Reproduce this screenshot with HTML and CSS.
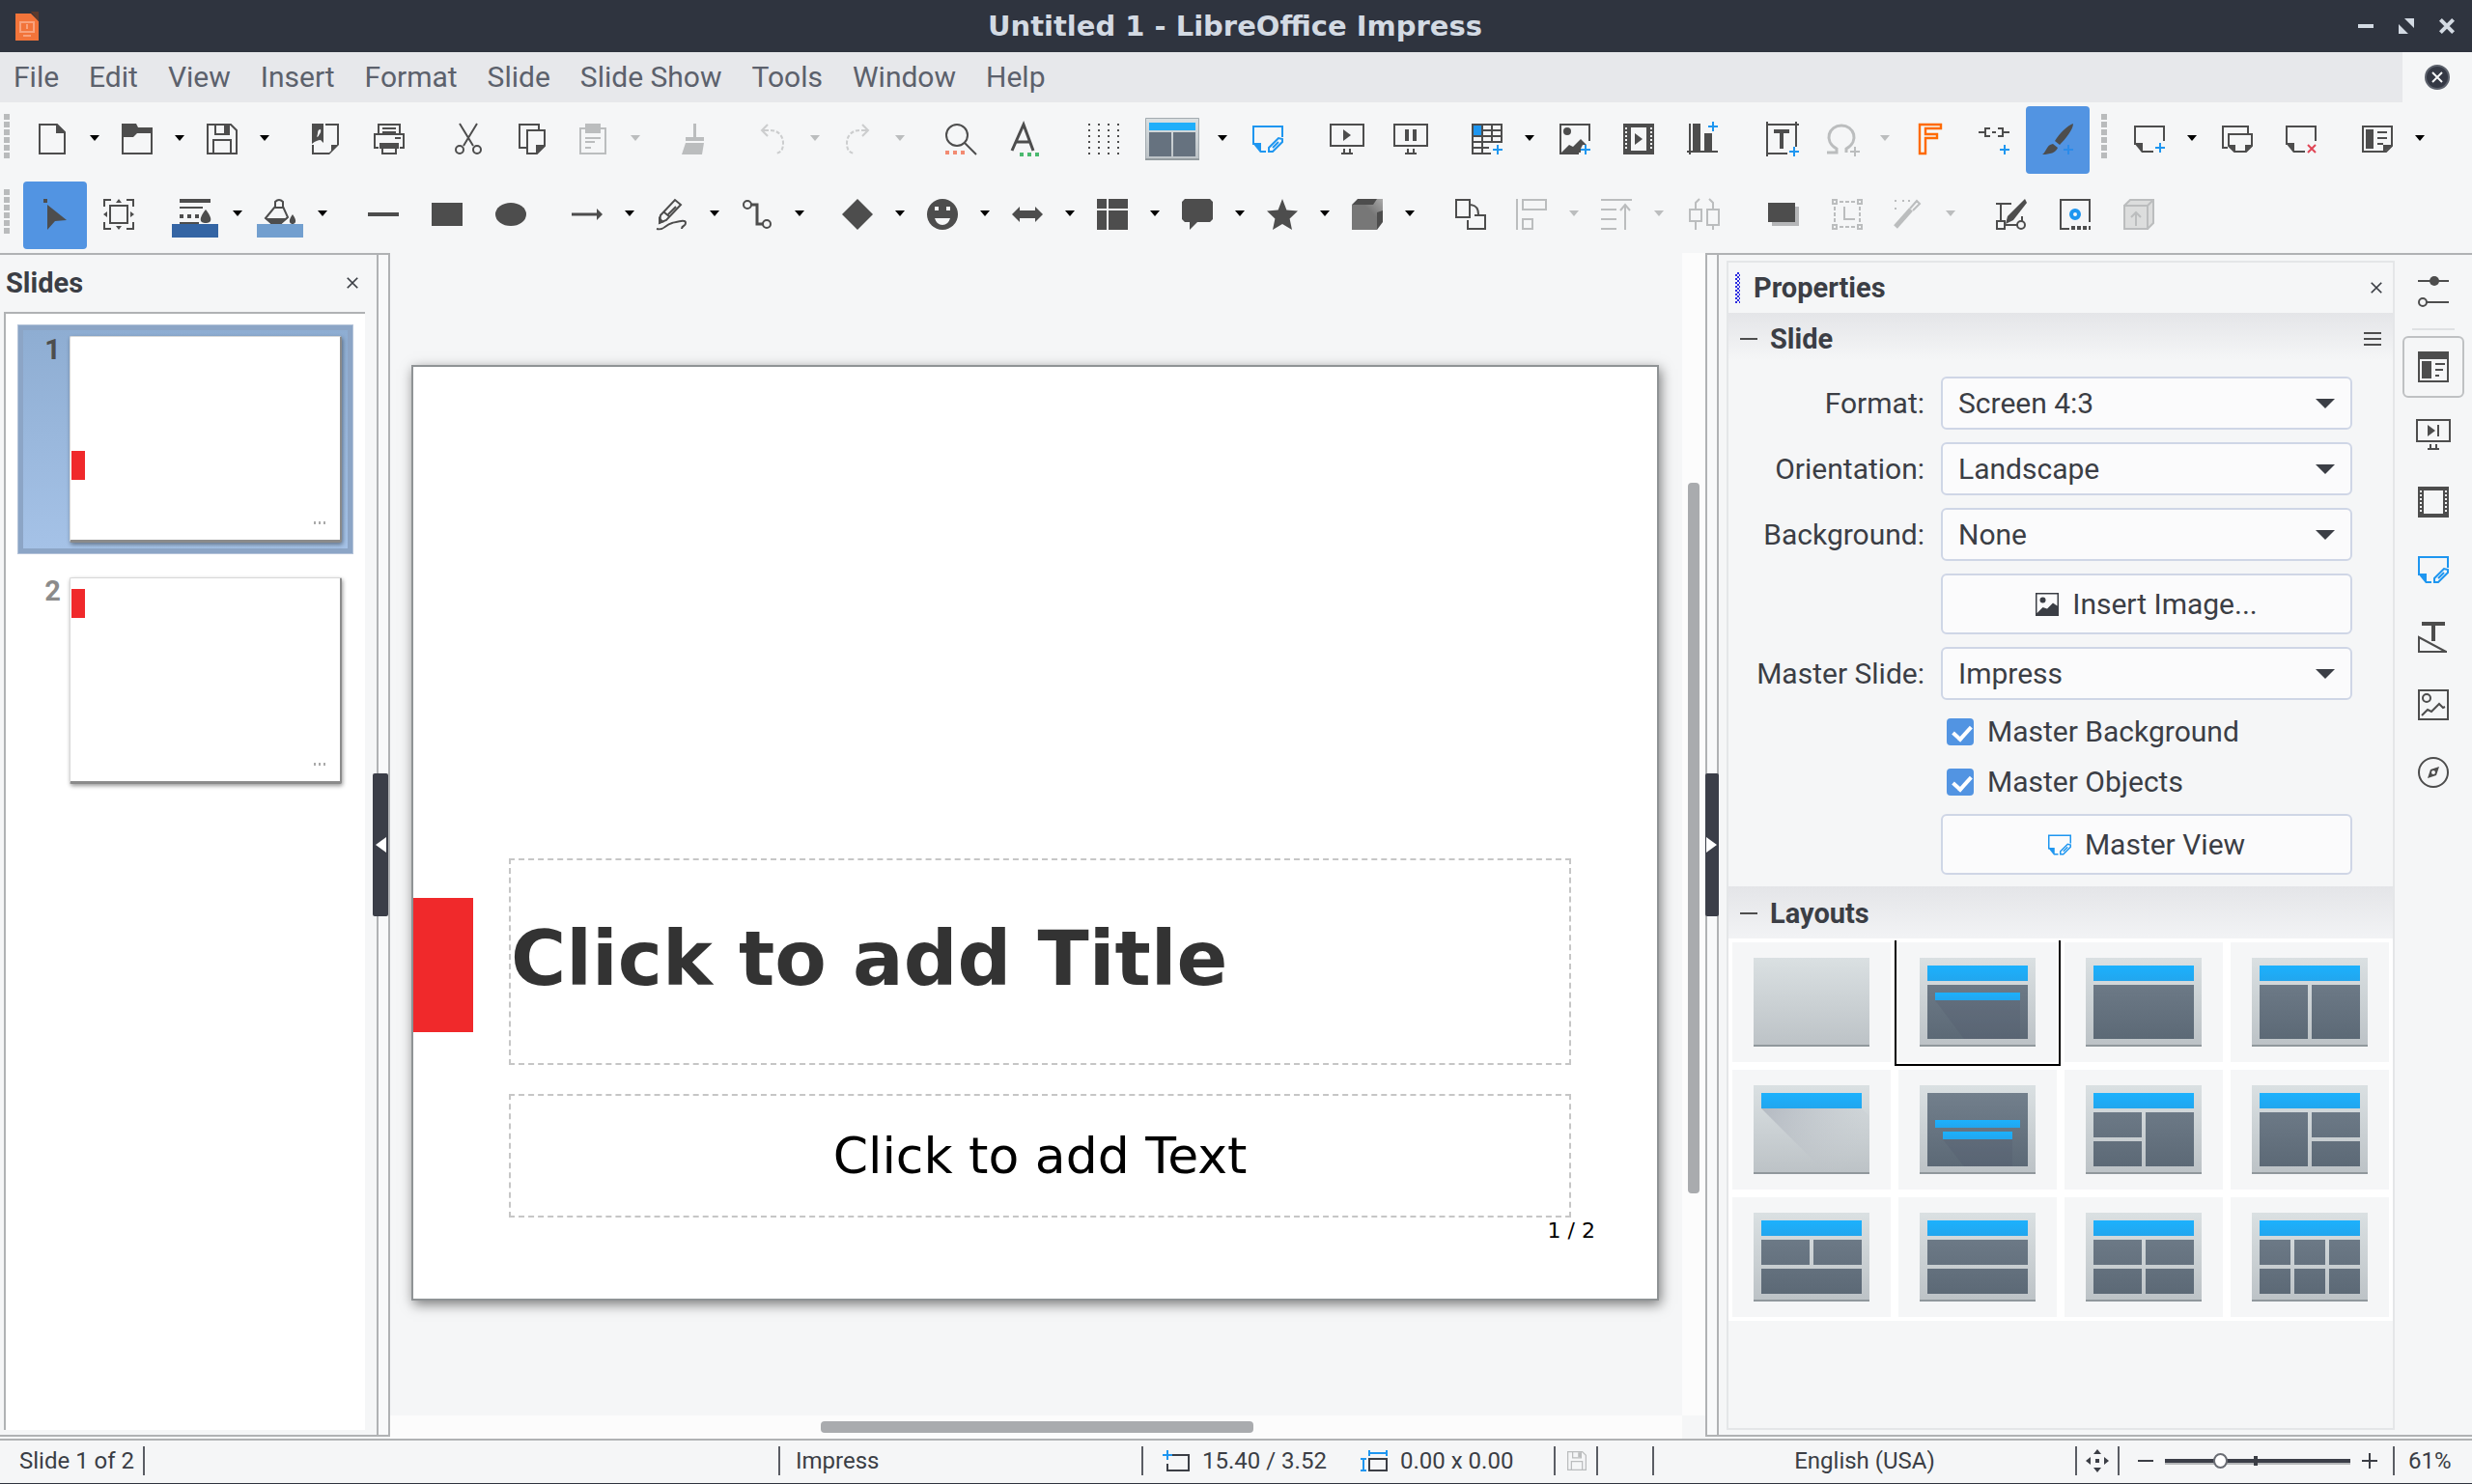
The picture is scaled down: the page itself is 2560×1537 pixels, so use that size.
FILE: index.html
```html
<!DOCTYPE html>
<html lang="en">
<head>
<meta charset="utf-8">
<title>Untitled 1 - LibreOffice Impress</title>
<link rel="stylesheet" href="styles.css">
</head>
<body>
<svg class="defs" aria-hidden="true">
<defs>
<linearGradient id="g-frame" x1="0" y1="0" x2="0" y2="1"><stop offset="0" stop-color="#dae0e2"/><stop offset="1" stop-color="#bcc2c6"/></linearGradient>
<linearGradient id="g-body" gradientUnits="userSpaceOnUse" x1="0" y1="8" x2="0" y2="84"><stop offset="0" stop-color="#727f8c"/><stop offset="1" stop-color="#5c6976"/></linearGradient>
<linearGradient id="g-bar" x1="0" y1="0" x2="0" y2="1"><stop offset="0" stop-color="#1cb1fd"/><stop offset="1" stop-color="#22a6ee"/></linearGradient>
<linearGradient id="g-cube" x1="0" y1="1" x2="1" y2="0"><stop offset=".6" stop-color="#777"/><stop offset="1" stop-color="#aaa"/></linearGradient>
<linearGradient id="g-shade" x1="0" y1="0" x2="1" y2=".6"><stop offset="0" stop-color="#9aa0ad" stop-opacity=".55"/><stop offset="1" stop-color="#c8ccd1" stop-opacity="0"/></linearGradient>
</defs>
<symbol id="new" viewBox="0 0 16 16"><path d="M1.5.5h9l4 4v11h-13z"/><path class="f" d="M10 0v5h5z"/></symbol>
<symbol id="open" viewBox="0 0 16 16"><path d="M.5.5v15h15V3"/><path class="f" d="M0 0h7.500l1 2H16v3H8L6 7H0z"/></symbol>
<symbol id="save" viewBox="0 0 16 16"><path d="M.5.5h12l3 3v12H.5zM4.500.5v5h7v-5M3.500 15V8.500h9V15"/><path class="f" d="M9 1h3v4H9z"/></symbol>
<symbol id="pdf" viewBox="0 0 16 16"><path d="M8 .5h6.500V11M1.500 11v4.500H10"/><path class="f" fill-rule="evenodd" d="M1 0h6v10L5.500 8.500C4 8.500 3 9 1 10.500zM5.500 3c-2 0-1 2-2 4l1-.5c0-1 1.500-1.500 1-3.500zM10 16v-1l1-1v-3h4z"/></symbol>
<symbol id="print" viewBox="0 0 16 16"><path d="M2.500 5V.5h11V5M4.500 2.500h7M4.500 4.500h7M2.500 12.500h-2v-7h15v7h-2M4.500 12v3.500h7V12M11 7.500h3"/><path class="f" d="M3 10h10v3H3z"/></symbol>
<symbol id="cut" viewBox="0 0 16 16"><path d="M3.500 0l7 11.500M12.500 0l-7 11.500"/><circle cx="3.500" cy="13.500" r="2"/><circle cx="12.500" cy="13.500" r="2"/></symbol>
<symbol id="copy" viewBox="0 0 16 16"><path d="M5 12.500H1.500V.5h10V3M5.500 3.500h9v8l-4 4h-5z"/><path class="f" d="M10 16v-5h5z"/></symbol>
<symbol id="paste" viewBox="0 0 16 16"><path d="M4 2.500H1.500v13h13v-13H12M4 7.500h8M4 9.500h5M4 12.500h3"/><path class="f" d="M4 0h8v5H4z"/></symbol>
<symbol id="clone" viewBox="0 0 16 16"><path class="f" d="M6.500 0h1.500v7h4v2H2.500V7h4zM2.500 10h9.500l-1 6H.5z"/></symbol>
<symbol id="undo" viewBox="0 0 16 16"><path d="M5.500.5l-3 3 3 3M2.500 3.500H6"/><path stroke-dasharray="2 1" d="M7 3.500c4 0 6.500 3 6.500 6.500s-1 5-4 5.500"/></symbol>
<symbol id="redo" viewBox="0 0 16 16"><path d="M10.500.5l3 3-3 3M13.500 3.500H10"/><path stroke-dasharray="2 1" d="M9 3.500C5 3.500 2.500 6.500 2.500 10s1 5 4 5.500"/></symbol>
<symbol id="find" viewBox="0 0 16 16"><circle cx="6" cy="6" r="5.500"/><path d="M10 10l6 6"/><path stroke="#f28b72" stroke-width="2" stroke-dasharray="2 2" d="M0 15h10"/></symbol>
<symbol id="spell" viewBox="0 0 16 16"><path stroke-width="1.500" d="M1.500 14L7.500.5 12.500 14M4 9.500h7"/><path stroke="#4bb96f" stroke-width="2" stroke-dasharray="2 2" d="M5.500 16h10"/></symbol>
<symbol id="grid" viewBox="0 0 16 16"><path stroke-dasharray="1 2" d="M.5 0v16M5.500 0v16M10.500 0v16M15.500 0v16"/></symbol>
<symbol id="layout" viewBox="0 0 56 44"><path fill="url(#g-frame)" stroke="none" d="M0 0h56v44H0z"/><path stroke="#a3abb0" d="M.5.5h55v42H.5z"/><path fill="#949ca0" stroke="none" d="M0 42h56v2H0z"/><path fill="#1eaefa" stroke="none" d="M4 5h48v8H4z"/><path fill="#66727f" stroke="none" d="M4 15h23v25H4zM29 15h23v25H29z"/></symbol>
<symbol id="master" viewBox="0 0 16 16"><path d="M.5 11V1.500h15V7"/><path class="f" d="M0 10h4.500v4H7v1H4z"/><path d="M8.500 14.500v-2l5-5 2 .5v1.500l-5 5zM10.500 12.500l3-3"/></symbol>
<symbol id="start" viewBox="-1 0 18 16"><path d="M-.5.5h17v11h-17zM5 15.500h6M6.500 13v2.500M9.500 13v2.500"/><path class="f" d="M6 3l4 3-4 3z"/></symbol>
<symbol id="pause" viewBox="-1 0 18 16"><path d="M-.5.5h17v11h-17zM5 15.500h6M6.500 13v2.500M9.500 13v2.500"/><path class="f" d="M5 3h2v6H5zM9 3h2v6H9z"/></symbol>
<symbol id="table" viewBox="0 0 16 16"><path d="M.5.5h15v9H.5zM.5 9v6.500H10M5.500 0v16M10.500 0v10M0 3.500h16M0 6.500h16M0 12.500h9"/><path class="b" d="M1 1h4v5H1z"/><path class="p" d="M13.500 11v5M11 13.500h5"/></symbol>
<symbol id="image" viewBox="0 0 16 16"><path d="M10 15.500H.5V.5h15V9"/><circle class="f" cx="4" cy="4" r="2"/><path class="f" d="M1 15l4-4 2 1 4-4 3 3h-2l-1 2v2z"/><path class="p" d="M13.500 11v5M11 13.500h5"/></symbol>
<symbol id="video" viewBox="0 0 16 16"><path class="f" fill-rule="evenodd" d="M0 0h16v16H0zM4 2v12h8V2z"/><path stroke="#f5f6f7" stroke-dasharray="1 1" d="M1.500 2v12M14.500 2v12"/><path class="f" d="M6 5l4 3-4 3z"/></symbol>
<symbol id="chart" viewBox="0 0 16 16"><path d="M1.500 0v16M0 14.500h16"/><path class="f" d="M3 0h4v14H3zM9 5h4v9H9z"/><path class="p" d="M13.500-1v5M11 1.500h5"/></symbol>
<symbol id="textbox" viewBox="0 0 16 16"><path d="M0 .5h17M.5-1v18M15.500-1v13M0 15.500h11"/><path stroke-width="2" d="M4 4h8M8 4v9"/><path class="p" d="M14.500 12v5M12 14.500h5"/></symbol>
<symbol id="omega" viewBox="0 0 16 16"><path stroke-width="1.500" d="M0 15h5v-2C-2 9 1 1 7.500 1S17 9 10 13v2"/><path d="M14.500 12v5M12 14.500h5"/></symbol>
<symbol id="fontwork" viewBox="0 0 16 16"><path stroke="#ff6a00" stroke-width="1.200" d="M2.500.5h11v2h-8v3h6v2h-6v8h-3z"/></symbol>
<symbol id="link" viewBox="0 0 16 16"><path d="M0 4.500h3M6 2.500H3.500v4H6M7 4.500h2M10 2.500h2.500v4H10M13 4.500h3"/><path class="p" d="M13.500 11v5M11 13.500h5"/></symbol>
<symbol id="draw" viewBox="0 0 16 16"><path class="f" d="M16 0c0 3-4 8-7 11L6.500 9C9 5 13 1 16 0zM5.500 10.500l2.500 2C7 15 4 16 0 16c2-1 2-5 5.500-5.500z"/><path stroke="#2b8bea" d="M13.500 11v5M11 13.500h5"/></symbol>
<symbol id="slide-add" viewBox="0 0 16 16"><path d="M.5 11V1.500h15V9M4 14.500h6"/><path class="f" d="M0 10h4.500v5H4z"/><path class="p" d="M13.500 10v5M11 12.500h5"/></symbol>
<symbol id="slide-dup" viewBox="0 0 16 16"><path d="M3 12.500H.5v-11h13V5M3.500 5.500h12v6l-3 3h-6l-3-3z"/><path class="f" d="M3 11h4v4zM12 15v-4h4z"/></symbol>
<symbol id="slide-del" viewBox="0 0 16 16"><path d="M.5 11V1.500h15V9M4 14.500h6"/><path class="f" d="M0 10h4.500v5H4z"/><path stroke="#e04556" d="M11.500 11l4 4M15.500 11l-4 4"/></symbol>
<symbol id="slide-lay" viewBox="0 0 16 16"><path d="M.5 1.500h15v10l-3 3H.5zM8 4.500h5M8 7.500h5M8 10.500h3"/><path class="f" d="M2 3h4v10H2zM11 15v-4h5z"/></symbol>
<symbol id="pointer" viewBox="0 0 16 16"><path class="f" d="M4 3l10 8-6 .5L4 16z"/><path class="f" d="M2 0h2v2H2z"/></symbol>
<symbol id="zoompan" viewBox="0 0 16 16"><path d="M3.500 3.500h9v9h-9zM.5 4V.5H4M12 .5h3.500V4M15.500 12v3.500H12M4 15.500H.5V12"/><path class="f" d="M8 0l1.500 2h-3zM8 16l1.500-2h-3zM0 8l2-1.500v3zM16 8l-2-1.500v3z"/></symbol>
<symbol id="linecolor" viewBox="0 0 24 20"><path stroke-width="2" d="M4 1h16"/><path d="M4 4.500h12M4 12.500h10"/><path stroke-width="2" stroke-dasharray="2 2" d="M4 9h10"/><path class="f" d="M17.500 5.500c4 5 3 7 0 7s-4-2 0-7z"/><path fill="#3465a4" stroke="none" d="M0 13h24v7H0z"/></symbol>
<symbol id="fillcolor" viewBox="0 0 24 20"><path d="M9.500 4V1.500q2-2 4 0V4L16 9.500 12 13H8L4.500 10zM9 4.500h5"/><path class="f" d="M4 10h12l-4 3.500H8zM18.500 8c3 4 1 5 0 5s-3-1 0-5z"/><path fill="#729fcf" stroke="none" d="M0 13h24v7H0z"/></symbol>
<symbol id="line" viewBox="0 0 16 16"><path stroke-width="2" d="M0 8h16"/></symbol>
<symbol id="rect" viewBox="0 0 16 16"><path class="f" d="M0 2h16v12H0z"/></symbol>
<symbol id="ellipse" viewBox="0 0 16 16"><ellipse class="f" cx="8" cy="8" rx="8" ry="6"/></symbol>
<symbol id="arrowline" viewBox="0 0 16 16"><path stroke-width="1.500" d="M0 8h14"/><path class="f" d="M13 5l3 3-3 3z"/></symbol>
<symbol id="curve" viewBox="0 0 16 16"><path d="M1.500 12.500l.5-4L9.500.5l3 2.500L5 11zM4 7l3 2.500M6 8l4-4M0 15.500c4 1 4-2 8-3 4-1 7-2 7 0s-2 1-2 3"/><path class="f" d="M1 13V9l3 3z"/></symbol>
<symbol id="connector" viewBox="0 0 16 16"><circle cx="3" cy="3" r="2"/><circle cx="13" cy="13" r="2"/><path stroke-width="1.500" d="M5 3h3v10h3"/></symbol>
<symbol id="diamond" viewBox="0 0 16 16"><path class="f" d="M8 0l8 8-8 8-8-8z"/></symbol>
<symbol id="smiley" viewBox="0 0 16 16"><circle class="f" cx="8" cy="8" r="8"/><path fill="#f5f6f7" stroke="none" d="M4 4h2v2H4zM10 4h2v2h-2zM4 10h8q-1 3.500-4 3.500T4 10z"/></symbol>
<symbol id="darrow" viewBox="0 0 16 16"><path class="f" d="M0 8l4-4v2h8V4l4 4-4 4v-2H4v2z"/></symbol>
<symbol id="flow" viewBox="0 0 16 16"><path class="f" d="M0 0h5v5H0zM6 0h10v5H6zM0 6h5v10H0zM6 6h10v10H6z"/></symbol>
<symbol id="callout" viewBox="0 0 16 16"><path class="f" d="M1.500 0h13L16 1.500v9L14.500 12H8l-4 4v-4H1.500L0 10.500v-9z"/></symbol>
<symbol id="star" viewBox="0 0 16 16"><path class="f" d="M8 0l2.200 5.800L16 6.200l-4.200 4L13 16l-5-3-5 3 1.200-5.800L0 6.200l5.800-.4z"/></symbol>
<symbol id="cube" viewBox="0 0 16 16"><path class="f" d="M0 3l3-3h13v12l-3 4V3z"/><path fill="url(#g-cube)" stroke="none" d="M0 3h11l2-3h3v6l-3 1v9H0z"/></symbol>
<symbol id="rotate" viewBox="0 0 16 16"><path d="M.5.5h7v9h-7zM7 3c4 0 5 2 5 5M13 8.500h2.500v7h-9V11M10 8.500h5"/></symbol>
<symbol id="align" viewBox="0 0 16 16"><path d="M.5 0v16M3.500.5h12v5h-12zM3.500 10.500h5v5h-5z"/></symbol>
<symbol id="arrange" viewBox="0 0 16 16"><path d="M0 .5h16M0 5.500h8M0 10.500h8M0 15.500h8M12.500 3v13M10 6l2.500-3L15 6"/></symbol>
<symbol id="distribute" viewBox="0 0 16 16"><path d="M.5 5.500h6v6h-6zM9.500 5.500h6v8h-6zM3.500 12v4M12.500 14v2M3.500 5V2l2-2M12.500 5V2l-2-2"/></symbol>
<symbol id="shadow" viewBox="0 0 16 16"><path fill="#b5b6b8" stroke="none" d="M2 4h14v10H2z"/><path class="f" d="M0 2h14v10H0z"/></symbol>
<symbol id="crop" viewBox="0 0 16 16"><path d="M.5.5h2v2h-2zM13.500.5h2v2h-2zM.5 13.500h2v2h-2zM13.500 13.500h2v2h-2zM6.500 4v6.500H12"/><path stroke-dasharray="2 1" d="M4 1.500h8M4 14.500h8M1.500 4v8M14.500 4v8"/></symbol>
<symbol id="wand" viewBox="0 0 16 16"><path stroke-width="2.500" d="M1.500 14.500l8-9"/><path d="M9 5l3.500-4 1.500 1.500L10.500 6M1 1h1M5 1h1M1 5h1M8 1h1"/></symbol>
<symbol id="points" viewBox="0 0 16 16"><path d="M0 2.500h8M2.500 2v9M.5 11.500h4v4h-4zM5 13.500h6M13.500 9v3"/><circle cx="13" cy="13.500" r="2"/><path class="f" d="M15 0l1 2-7 9-4 2 1-4z"/></symbol>
<symbol id="glue" viewBox="0 0 16 16"><path d="M5 15.500H.5V.5h15V12"/><path stroke-width="2" stroke-dasharray="2 1" d="M6 15h10"/><circle cx="8" cy="8" r="2" stroke="#1e96f0" stroke-width="2"/></symbol>
<symbol id="extrude" viewBox="0 0 16 16"><path fill="#dcdddd" d="M.5 3.500h12v12H.5zM.5 3.500l3-3h12v12l-3 3M12.500 3.500l3-3M6.500 14V7M4 9.500L6.500 7 9 9.500"/></symbol>
<symbol id="picture" viewBox="0 0 16 16"><path class="f" fill-rule="evenodd" d="M0 0h16v16H0zM1 1v13l4-4 3 1 4-4 3 2V1z"/><circle class="f" cx="5" cy="5" r="2"/></symbol>
<symbol id="sliders" viewBox="0 0 16 16"><path d="M0 2.500h16M4 13.500h12"/><circle class="f" cx="8.500" cy="2.500" r="2.500"/><circle cx="2.500" cy="13.500" r="2"/></symbol>
<symbol id="props" viewBox="0 0 16 16"><path d="M.5.5h15v15H.5zM9 6.500h5M9 9.500h4M9 12.500h2"/><path class="f" d="M0 0h16v4H0zM2 5h5v9H2z"/></symbol>
<symbol id="trans" viewBox="-1 0 18 16"><path d="M-.5.5h17v11h-17zM5 15.500h6M6.500 13v2.500M9.500 13v2.500M10.500 3v6"/><path class="f" d="M5 3l4 3-4 3z"/></symbol>
<symbol id="film" viewBox="0 0 16 16"><path class="f" fill-rule="evenodd" d="M0 0h16v16H0zM3 2v12h10V2z"/><path stroke="#f5f6f7" stroke-dasharray="1 1" d="M1.500 2v12M14.500 2v12"/></symbol>
<symbol id="styles" viewBox="0 0 16 16"><path stroke-width="2" d="M2 1h12M8 1v9"/><path d="M.5 8v7.500h14zM0 15.500h15"/></symbol>
<symbol id="gallery" viewBox="0 0 16 16"><path d="M.5.5h15v15H.5zM2 13.500l3-3 2 1 4-4 2 2 1-.5"/><circle cx="4.500" cy="4.500" r="2"/></symbol>
<symbol id="compass" viewBox="0 0 16 16"><circle cx="8" cy="8" r="7.500"/><path class="f" fill-rule="evenodd" d="M11 5l-1.500 4.500L5 11l1.500-4.500zM8 7a1 1 0 100 2 1 1 0 000-2z"/></symbol>
<symbol id="pos" viewBox="0 0 14 11"><path d="M5 2.500h8.500v8h-11V7"/><path class="p" d="M2.500 0v5M0 2.500h5"/></symbol>
<symbol id="size" viewBox="0 0 14 11"><path d="M4.500 4.500h9v6h-9z"/><path class="p" d="M4.500 0v3M13.500 0v3M4 1.500h10M0 4.500h3M0 10.500h3M1.500 4v7"/></symbol>
<symbol id="fit" viewBox="0 0 12 12"><path class="f" d="M6 0l2 2.500H4zM6 12l2-2.500H4zM0 6l2.500-2v4zM12 6L9.500 4v4zM5 5h2v2H5z"/></symbol>
<symbol id="shade" viewBox="0 0 120 92"><path fill="url(#g-frame)" d="M0 0h120v92H0z"/><path fill="#90989c" d="M0 90h120v2H0z"/></symbol>
</svg>

<div class="app">
<header class="titlebar">
  <svg class="appicon" viewBox="0 0 12 15"><path fill="#f2743a" d="M0 1h8l4 4v10H0z"/><path fill="#5d3a2c" d="M8 0h4v5z"/><path fill="none" stroke="#f8a27c" d="M2.500 5.500h7v5h-7zM6 6.500v2.500M4 12.500h4"/></svg>
  <h1>Untitled 1 - LibreOffice Impress</h1>
  <div class="winbtns">
    <button aria-label="Minimize"><svg viewBox="0 0 8 8"><path fill="#d3dae3" d="M0 3h8v2H0z"/></svg></button>
    <button aria-label="Restore"><svg viewBox="0 0 8 8"><path fill="#d3dae3" d="M3 0h5v5zM0 3l5 5H0z"/></svg></button>
    <button aria-label="Close"><svg viewBox="0 0 8 8"><path stroke="#d3dae3" stroke-width="2" d="M.7.7l6.600 6.600M7.300.7L.7 7.300"/></svg></button>
  </div>
</header>
<nav class="menubar">
  <div class="menus"><a href="#">File</a><a href="#">Edit</a><a href="#">View</a><a href="#">Insert</a><a href="#">Format</a><a href="#">Slide</a><a href="#">Slide Show</a><a href="#">Tools</a><a href="#">Window</a><a href="#">Help</a></div>
  <button class="docclose" aria-label="Close document"><svg viewBox="0 0 12 12"><circle cx="6" cy="6" r="6" fill="#353945"/><path stroke="#f5f6f7" d="M3.500 3.500l5 5M8.500 3.500l-5 5"/></svg></button>
</nav>
<div class="toolbar">
  <i class="grip"></i>
  <span class="split"><button class="tb" aria-label="New"><svg><use href="#new"/></svg></button><button class="caret" aria-label="New options"></button></span>
  <span class="split"><button class="tb" aria-label="Open"><svg><use href="#open"/></svg></button><button class="caret" aria-label="Open options"></button></span>
  <span class="split"><button class="tb" aria-label="Save"><svg><use href="#save"/></svg></button><button class="caret" aria-label="Save options"></button></span>
  <i class="sep"></i>
  <button class="tb" aria-label="Export PDF"><svg><use href="#pdf"/></svg></button>
  <button class="tb" aria-label="Print"><svg><use href="#print"/></svg></button>
  <i class="sep"></i>
  <button class="tb" aria-label="Cut"><svg><use href="#cut"/></svg></button>
  <button class="tb" aria-label="Copy"><svg><use href="#copy"/></svg></button>
  <span class="split off"><button class="tb" disabled aria-label="Paste"><svg><use href="#paste"/></svg></button><button class="caret" disabled aria-label="Paste options"></button></span>
  <i class="sep"></i>
  <button class="tb off" disabled aria-label="Clone formatting"><svg><use href="#clone"/></svg></button>
  <i class="sep"></i>
  <span class="split off faint"><button class="tb" disabled aria-label="Undo"><svg><use href="#undo"/></svg></button><button class="caret" disabled aria-label="Undo options"></button></span>
  <span class="split off faint"><button class="tb" disabled aria-label="Redo"><svg><use href="#redo"/></svg></button><button class="caret" disabled aria-label="Redo options"></button></span>
  <i class="sep"></i>
  <button class="tb" aria-label="Find"><svg><use href="#find"/></svg></button>
  <button class="tb" aria-label="Spelling"><svg><use href="#spell"/></svg></button>
  <i class="sep"></i>
  <button class="tb" aria-label="Display grid"><svg><use href="#grid"/></svg></button>
  <span class="split wide"><button class="tb" aria-label="Display views"><svg><use href="#layout"/></svg></button><button class="caret" aria-label="View options"></button></span>
  <button class="tb blue" aria-label="Master slide"><svg><use href="#master"/></svg></button>
  <i class="sep"></i>
  <button class="tb screen" aria-label="Start from first slide"><svg><use href="#start"/></svg></button>
  <button class="tb screen" aria-label="Start from current slide"><svg><use href="#pause"/></svg></button>
  <i class="sep"></i>
  <span class="split"><button class="tb" aria-label="Table"><svg><use href="#table"/></svg></button><button class="caret" aria-label="Table options"></button></span>
  <button class="tb" aria-label="Image"><svg><use href="#image"/></svg></button>
  <button class="tb" aria-label="Video"><svg><use href="#video"/></svg></button>
  <button class="tb" aria-label="Chart"><svg><use href="#chart"/></svg></button>
  <i class="sep"></i>
  <button class="tb" aria-label="Text box"><svg><use href="#textbox"/></svg></button>
  <span class="split off"><button class="tb" disabled aria-label="Special character"><svg><use href="#omega"/></svg></button><button class="caret" disabled aria-label="Character options"></button></span>
  <button class="tb" aria-label="Fontwork"><svg><use href="#fontwork"/></svg></button>
  <button class="tb" aria-label="Hyperlink"><svg><use href="#link"/></svg></button>
  <button class="tb on" aria-label="Show draw functions"><svg><use href="#draw"/></svg></button>
  <i class="grip mid"></i>
  <span class="split"><button class="tb" aria-label="New slide"><svg><use href="#slide-add"/></svg></button><button class="caret" aria-label="New slide options"></button></span>
  <button class="tb" aria-label="Duplicate slide"><svg><use href="#slide-dup"/></svg></button>
  <button class="tb" aria-label="Delete slide"><svg><use href="#slide-del"/></svg></button>
  <i class="sep"></i>
  <span class="split"><button class="tb" aria-label="Slide layout"><svg><use href="#slide-lay"/></svg></button><button class="caret" aria-label="Layout options"></button></span>
</div>
<div class="toolbar">
  <i class="grip"></i>
  <button class="tb on" aria-label="Select"><svg><use href="#pointer"/></svg></button>
  <button class="tb" aria-label="Zoom and pan"><svg><use href="#zoompan"/></svg></button>
  <i class="sep"></i>
  <span class="split color"><button class="tb" aria-label="Line color"><svg><use href="#linecolor"/></svg></button><button class="caret" aria-label="Line color options"></button></span>
  <span class="split color"><button class="tb" aria-label="Fill color"><svg><use href="#fillcolor"/></svg></button><button class="caret" aria-label="Fill color options"></button></span>
  <i class="sep"></i>
  <button class="tb" aria-label="Line"><svg><use href="#line"/></svg></button>
  <button class="tb" aria-label="Rectangle"><svg><use href="#rect"/></svg></button>
  <button class="tb" aria-label="Ellipse"><svg><use href="#ellipse"/></svg></button>
  <i class="sep"></i>
  <span class="split"><button class="tb" aria-label="Lines and arrows"><svg><use href="#arrowline"/></svg></button><button class="caret" aria-label="Arrow options"></button></span>
  <span class="split"><button class="tb" aria-label="Curves"><svg><use href="#curve"/></svg></button><button class="caret" aria-label="Curve options"></button></span>
  <span class="split"><button class="tb" aria-label="Connectors"><svg><use href="#connector"/></svg></button><button class="caret" aria-label="Connector options"></button></span>
  <i class="sep"></i>
  <span class="split"><button class="tb" aria-label="Basic shapes"><svg><use href="#diamond"/></svg></button><button class="caret" aria-label="Basic shape options"></button></span>
  <span class="split"><button class="tb" aria-label="Symbol shapes"><svg><use href="#smiley"/></svg></button><button class="caret" aria-label="Symbol options"></button></span>
  <span class="split"><button class="tb" aria-label="Block arrows"><svg><use href="#darrow"/></svg></button><button class="caret" aria-label="Block arrow options"></button></span>
  <span class="split"><button class="tb" aria-label="Flowchart"><svg><use href="#flow"/></svg></button><button class="caret" aria-label="Flowchart options"></button></span>
  <span class="split"><button class="tb" aria-label="Callouts"><svg><use href="#callout"/></svg></button><button class="caret" aria-label="Callout options"></button></span>
  <span class="split"><button class="tb" aria-label="Stars"><svg><use href="#star"/></svg></button><button class="caret" aria-label="Star options"></button></span>
  <span class="split"><button class="tb" aria-label="3D objects"><svg><use href="#cube"/></svg></button><button class="caret" aria-label="3D options"></button></span>
  <i class="sep"></i>
  <button class="tb" aria-label="Rotate"><svg><use href="#rotate"/></svg></button>
  <span class="split off"><button class="tb" disabled aria-label="Align"><svg><use href="#align"/></svg></button><button class="caret" disabled aria-label="Align options"></button></span>
  <span class="split off"><button class="tb" disabled aria-label="Arrange"><svg><use href="#arrange"/></svg></button><button class="caret" disabled aria-label="Arrange options"></button></span>
  <button class="tb off" disabled aria-label="Distribute"><svg><use href="#distribute"/></svg></button>
  <i class="sep"></i>
  <button class="tb" aria-label="Shadow"><svg><use href="#shadow"/></svg></button>
  <button class="tb off" disabled aria-label="Crop"><svg><use href="#crop"/></svg></button>
  <span class="split off"><button class="tb" disabled aria-label="Filter"><svg><use href="#wand"/></svg></button><button class="caret" disabled aria-label="Filter options"></button></span>
  <i class="sep"></i>
  <button class="tb" aria-label="Points"><svg><use href="#points"/></svg></button>
  <button class="tb" aria-label="Glue points"><svg><use href="#glue"/></svg></button>
  <button class="tb off" disabled aria-label="Extrusion"><svg><use href="#extrude"/></svg></button>
</div>

<main class="main">
  <aside class="slides">
    <div class="slides-head"><h2>Slides</h2><button class="x" aria-label="Close slides"><svg viewBox="0 0 8 8"><path d="M1 1l6 6M7 1L1 7"/></svg></button></div>
    <ol class="thumbs">
      <li class="sel"><b>1</b><div class="thumb first"><i></i><span></span></div></li>
      <li><b>2</b><div class="thumb second"><i></i><span></span></div></li>
    </ol>
  </aside>
  <div class="sash left"><button aria-label="Hide slides"></button></div>
  <section class="work">
    <div class="canvas">
      <article class="slide">
        <i class="accent"></i>
        <div class="ph title">Click to add Title</div>
        <div class="ph sub">Click to add Text</div>
        <span class="num">1 / 2</span>
      </article>
    </div>
    <div class="vscroll"><i></i></div>
    <div class="hscroll"><i></i></div>
  </section>
  <div class="sash right"><button aria-label="Hide sidebar"></button></div>
  <aside class="sidebar">
    <div class="deck">
      <div class="deck-head"><i class="dither"></i><h2>Properties</h2><button class="x" aria-label="Close sidebar"><svg viewBox="0 0 8 8"><path d="M1 1l6 6M7 1L1 7"/></svg></button></div>
      <div class="sec-head"><i class="dash"></i><h3>Slide</h3><button class="burger" aria-label="More options"></button></div>
      <form class="props">
        <label for="fmt">Format:</label><div class="sel-box"><select id="fmt"><option>Screen 4:3</option></select></div>
        <label for="ori">Orientation:</label><div class="sel-box"><select id="ori"><option>Landscape</option></select></div>
        <label for="bg">Background:</label><div class="sel-box"><select id="bg"><option>None</option></select></div>
        <button type="button" class="btn"><svg><use href="#picture"/></svg>Insert Image...</button>
        <label for="ms">Master Slide:</label><div class="sel-box"><select id="ms"><option>Impress</option></select></div>
        <div class="checks">
          <label><input type="checkbox" checked>Master Background</label>
          <label><input type="checkbox" checked>Master Objects</label>
        </div>
        <button type="button" class="btn"><svg class="blue"><use href="#master"/></svg>Master View</button>
      </form>
      <div class="sec-head tall"><i class="dash"></i><h3>Layouts</h3></div>
      <div class="layouts">
        <button aria-label="Blank"><svg viewBox="0 0 120 92"><use href="#shade"/></svg></button>
        <button class="cur" aria-label="Title slide"><svg viewBox="0 0 120 92"><use href="#shade"/><path class="body" d="M8 28h104v56H8z"/><path class="cast" d="M16 44h88v40H46z"/><path class="bar" d="M8 8h104v16H8z"/><path class="bar" d="M16 36h88v8H16z"/></svg></button>
        <button aria-label="Title, content"><svg viewBox="0 0 120 92"><use href="#shade"/><path class="bar" d="M8 8h104v16H8z"/><path class="body" d="M8 28h104v56H8z"/></svg></button>
        <button aria-label="Title and two contents"><svg viewBox="0 0 120 92"><use href="#shade"/><path class="bar" d="M8 8h104v16H8z"/><path class="body" d="M8 28h50v56H8zM62 28h50v56H62z"/></svg></button>
        <button aria-label="Title only"><svg viewBox="0 0 120 92"><use href="#shade"/><path fill="url(#g-shade)" d="M8 24h104l8 8v58H74z"/><path class="bar" d="M8 8h104v16H8z"/></svg></button>
        <button aria-label="Centered text"><svg viewBox="0 0 120 92"><use href="#shade"/><path class="body" d="M8 8h104v76H8z"/><path class="cast" d="M24 56h72v28H46z"/><path class="bar" d="M16 36h88v8H16z"/><path class="bar" d="M24 48h72v8H24z"/></svg></button>
        <button aria-label="Title, two contents and content"><svg viewBox="0 0 120 92"><use href="#shade"/><path class="bar" d="M8 8h104v16H8z"/><path class="body" d="M8 28h50v26H8zM8 58h50v26H8zM62 28h50v56H62z"/></svg></button>
        <button aria-label="Title, content and two contents"><svg viewBox="0 0 120 92"><use href="#shade"/><path class="bar" d="M8 8h104v16H8z"/><path class="body" d="M8 28h50v56H8zM62 28h50v26H62zM62 58h50v26H62z"/></svg></button>
        <button aria-label="Title, two contents over content"><svg viewBox="0 0 120 92"><use href="#shade"/><path class="bar" d="M8 8h104v16H8z"/><path class="body" d="M8 28h50v26H8zM62 28h50v26H62zM8 58h104v26H8z"/></svg></button>
        <button aria-label="Title, content over content"><svg viewBox="0 0 120 92"><use href="#shade"/><path class="bar" d="M8 8h104v16H8z"/><path class="body" d="M8 28h104v26H8zM8 58h104v26H8z"/></svg></button>
        <button aria-label="Title, four contents"><svg viewBox="0 0 120 92"><use href="#shade"/><path class="bar" d="M8 8h104v16H8z"/><path class="body" d="M8 28h50v26H8zM62 28h50v26H62zM8 58h50v26H8zM62 58h50v26H62z"/></svg></button>
        <button aria-label="Title, six contents"><svg viewBox="0 0 120 92"><use href="#shade"/><path class="bar" d="M8 8h104v16H8z"/><path class="body" d="M8 28h32v26H8zM44 28h32v26H44zM80 28h32v26H80zM8 58h32v26H8zM44 58h32v26H44zM80 58h32v26H80z"/></svg></button>
      </div>
    </div>
    <nav class="tabs">
      <button aria-label="Sidebar settings"><svg><use href="#sliders"/></svg></button>
      <hr>
      <button class="cur" aria-label="Properties"><svg><use href="#props"/></svg></button>
      <button class="screen" aria-label="Slide transition"><svg><use href="#trans"/></svg></button>
      <button aria-label="Animation"><svg><use href="#film"/></svg></button>
      <button class="blue" aria-label="Master slides"><svg><use href="#master"/></svg></button>
      <button aria-label="Styles"><svg><use href="#styles"/></svg></button>
      <button aria-label="Gallery"><svg><use href="#gallery"/></svg></button>
      <button aria-label="Navigator"><svg><use href="#compass"/></svg></button>
    </nav>
  </aside>
</main>

<footer class="status">
  <span class="c-page">Slide 1 of 2</span>
  <span class="c-info"></span>
  <span class="c-master">Impress</span>
  <span class="c-pos"><svg><use href="#pos"/></svg><em>15.40 / 3.52</em><svg><use href="#size"/></svg>0.00 x 0.00</span>
  <span class="c-save"><svg><use href="#save"/></svg></span>
  <span class="c-sign"></span>
  <span class="c-lang">English (USA)</span>
  <span class="c-fit"><svg><use href="#fit"/></svg></span>
  <span class="c-zoom"><button class="zb" aria-label="Zoom out"></button><span class="range"><input type="range" min="0" max="100" value="28" aria-label="Zoom"><i></i></span><button class="zb plus" aria-label="Zoom in"></button></span>
  <span class="c-pct">61%</span>
</footer>
</div>
</body>
</html>
```
FILE: styles.css
```css
:root {
  --bg: #f5f6f7;
  --ink: #3b3e45;
  --icon: #4d4d4d;
  --off: #bbbdbe;
  --blue: #1e96f0;
  --accent: #5294e2;
  --line: #b0b2b4;
}
* { box-sizing: border-box; }
html, body { height: 100%; margin: 0; }
body {
  background: var(--bg);
  color: var(--ink);
  font: 30px/36px Roboto, "Liberation Sans", sans-serif;
}
button { padding: 0; border: 0; background: none; color: inherit; font: inherit; }
h1, h2, h3 { margin: 0; font-size: 29px; line-height: 36px; font-weight: 700; }
svg { display: block; fill: none; stroke: currentColor; overflow: visible; flex: none; }
symbol { overflow: visible; }
.f { fill: currentColor; stroke: none; }
.b { fill: var(--blue); stroke: none; }
.p { stroke: var(--blue); }
.defs { position: absolute; width: 0; height: 0; }
.app { display: flex; flex-direction: column; min-height: 100%; border-bottom: 1px solid #2f343f; }

.titlebar {
  display: grid;
  grid-template-columns: 1fr auto 1fr;
  align-items: center;
  height: 54px;
  padding: 0 18px 0 16px;
  background: #2f343f;
  color: #d3dae3;
}
.titlebar h1 { font: 700 29px/32px "DejaVu Sans", sans-serif; }
.titlebar svg { stroke: none; }
.appicon { width: 24px; height: 30px; }
.winbtns { display: flex; justify-content: flex-end; gap: 26px; }
.winbtns svg { width: 16px; height: 16px; }

.menubar { display: flex; height: 52px; background: #e7e8eb; color: #5c616c; }
.menus { display: flex; flex: 1; align-items: center; gap: 31px; padding-left: 14px; }
.menus a { color: inherit; text-decoration: none; }
.docclose { display: flex; align-items: center; justify-content: center; width: 72px; background: var(--bg); }
.docclose svg { width: 24px; height: 24px; }

.toolbar { display: flex; align-items: center; height: 78px; color: var(--icon); }
.grip {
  align-self: flex-start;
  width: 6px; height: 46px; margin: 12px 14px 0 4px;
  background: repeating-linear-gradient(#b9bbbc 0 6px, transparent 6px 8px);
}
.grip.mid { margin: 12px 14px 0 12px; }
.sep { width: 16px; }
.tb { display: flex; align-items: center; justify-content: center; width: 66px; height: 70px; padding-bottom: 2px; border-radius: 4px; }
.tb svg { width: 32px; height: 32px; }
.tb.on { background: var(--accent); }
.tb.screen svg { width: 36px; height: 32px; }
.tb.blue, .blue { color: var(--blue); }
.split { display: flex; }
.split .tb { width: 60px; }
.caret { display: flex; align-items: center; justify-content: center; width: 28px; padding-bottom: 4px; color: #000; }
.caret::before { content: ""; border: 5px solid transparent; border-top: 6px solid; border-bottom: 0; }
.off, .off .caret { color: var(--off); }
.faint svg { opacity: .7; }
.split.wide .tb { width: 76px; }
.split.wide .tb svg { width: 56px; height: 44px; }
.split.color .tb { padding-bottom: 0; }
.split.color .tb svg { width: 48px; height: 40px; margin-top: 6px; }

.main { display: flex; flex: 1; min-height: 1100px; }
.slides { display: flex; flex-direction: column; width: 390px; border: solid var(--line); border-width: 2px 0; padding-bottom: 5px; }
.slides-head { display: flex; align-items: center; justify-content: space-between; height: 59px; padding: 0 18px 2px 6px; }
.x svg { width: 14px; height: 14px; }
.thumbs {
  display: flex; flex: 1; flex-direction: column; gap: 12px;
  margin: 0 12px 0 4px; padding: 11px 12px;
  border: solid var(--line); border-width: 2px 0 0 2px;
  background: #fff; list-style: none;
}
.thumbs li { display: flex; gap: 9px; height: 238px; padding: 6px; border: 6px solid transparent; background-clip: padding-box; }
.thumbs li.sel {
  border-color: #8ca5c6;
  background: linear-gradient(#8eadd2, #a5c2e7);
  outline: 1px solid #b4c3d9; outline-offset: -1px;
}
.thumbs b { width: 33px; font-size: 29px; line-height: 28px; text-align: right; color: #8b8b8b; }
.thumbs .sel b { color: #4d4d4d; }
.thumb { position: relative; width: 283px; height: 214px; background: #fff; border: 1px solid #d8d8d8; border-right: 2px solid #8b8b8b; border-bottom: 3px solid #8b8b8b; border-radius: 2px; box-shadow: 1px 2px 4px #0006; }
.thumb i { position: absolute; left: 1px; width: 14px; height: 30px; background: #f0292b; }
.thumb.first i { top: 56%; }
.thumb.second i { top: 5%; }
.thumb span { position: absolute; right: 15px; bottom: 16px; width: 12px; height: 3px; background: repeating-linear-gradient(90deg, #aaa 0 2px, transparent 2px 5px); }

.sash { display: flex; align-items: center; width: 14px; border: 2px solid var(--line); background: #f8f9fa; }
.sash button { position: relative; flex: none; width: 14px; height: 148px; background: #3b3e48; border-radius: 2px; }
.sash.left button { width: 16px; margin-left: -6px; }
.sash.right button { margin-left: -2px; }
.sash button::before { content: ""; position: absolute; left: 3px; top: 66px; border: 8px solid transparent; border-right: 11px solid #fff; border-left: 0; }
.sash.right button::before { left: 1px; border-left: 11px solid #fff; border-right: 0; }

.work { display: grid; flex: 1; min-width: 0; grid-template: 1fr 24px / 1fr 24px; border-bottom: 2px solid var(--line); margin-bottom: -4px; }
.canvas { display: flex; align-items: center; padding: 0 24px 4px 22px; }
.slide {
  position: relative; width: 100%; aspect-ratio: 4 / 3;
  background: #fff; border: 2px solid #8f9395;
  box-shadow: 2px 4px 12px #00000080;
}
.accent { position: absolute; left: 0; top: 57%; width: 62px; height: 139px; background: #f0292b; }
.ph { position: absolute; left: 99px; right: 89px; display: flex; align-items: center; border: 2px dashed #c6c6c6; font-family: "DejaVu Sans", sans-serif; }
.ph.title { top: 509px; height: 214px; font-size: 78px; line-height: 92px; font-weight: 700; color: #333; padding-bottom: 6px; }
.ph.sub { top: 753px; height: 128px; justify-content: center; font-size: 52px; line-height: 60px; color: #000; }
.num { position: absolute; right: 64px; bottom: 56px; font: 22px/28px "DejaVu Sans", sans-serif; color: #000; }
.vscroll, .hscroll { display: flex; background: #fcfcfc; }
.vscroll { justify-content: center; }
.vscroll i { width: 12px; height: 736px; margin-top: 238px; border-radius: 4px; background: #a9abae; }
.hscroll { align-items: center; }
.hscroll i { width: 448px; height: 12px; margin-left: 446px; border-radius: 4px; background: #a9abae; }

.sidebar { display: flex; width: 780px; padding: 6px 0 5px 8px; border: solid var(--line); border-width: 2px 0; }
.deck { width: 692px; border: 2px solid #e4e6e8; }
.deck-head { display: flex; align-items: center; height: 52px; padding: 0 10px 0 7px; }
.dither { width: 5px; height: 32px; margin-right: 14px; background: repeating-conic-gradient(#2a2ae0 0 25%, transparent 0 50%) 0 0 / 4px 4px; }
.deck-head .x { margin-left: auto; }
.sec-head { display: flex; align-items: center; height: 50px; padding: 4px 12px 0; background: linear-gradient(#e4e5e8, var(--bg)); }
.sec-head.tall { height: 54px; padding-top: 2px; background: linear-gradient(#e4e5e8, #f2f3f5); }
.dash { width: 18px; height: 2px; margin-right: 13px; background: var(--icon); }
.burger { width: 18px; height: 14px; margin-left: auto; background: repeating-linear-gradient(var(--icon) 0 2px, transparent 2px 6px); }
.props { display: grid; grid-template-columns: 203px 1fr; column-gap: 17px; row-gap: 13px; padding: 16px 42px 12px 0; }
.props > label { display: flex; align-items: center; justify-content: flex-end; }
.sel-box { position: relative; display: flex; }
.sel-box::after { content: ""; position: absolute; right: 18px; top: 23px; border: 10px solid transparent; border-top: 10px solid var(--ink); border-bottom: 0; pointer-events: none; }
.sel-box select, .btn { width: 100%; border: 2px solid #cfd6e6; border-radius: 6px; background: #fbfbfc; color: inherit; font: inherit; }
.sel-box select { height: 55px; padding: 0 16px; appearance: none; }
.btn { grid-column: 2; display: flex; align-items: center; justify-content: center; gap: 14px; height: 63px; }
.btn svg { width: 24px; height: 24px; }
.checks { grid-column: 2; display: flex; flex-direction: column; gap: 12px; padding-left: 6px; }
.checks label { display: flex; align-items: center; gap: 14px; height: 40px; }
.checks input { position: relative; width: 28px; height: 28px; margin: 0; appearance: none; border-radius: 4px; background: var(--accent); }
.checks input::after { content: ""; position: absolute; left: 10px; top: 4px; width: 8px; height: 15px; border: solid #fff; border-width: 0 4px 4px 0; transform: rotate(42deg); }

.layouts { display: grid; grid-template-columns: repeat(4, 1fr); gap: 8px; padding: 4px; background: #fff; }
.layouts button { display: flex; align-items: center; justify-content: center; height: 124px; background: var(--bg); }
.layouts svg { width: 120px; height: 92px; stroke: none; }
.layouts .cur { outline: 2px solid #000; outline-offset: 2px; clip-path: inset(-2px -6px -6px); }
.bar { fill: url(#g-bar); }
.body { fill: url(#g-body); }
.cast { fill: #50586a; opacity: .25; }
.tabs { display: flex; flex: 1; flex-direction: column; align-items: center; gap: 6px; color: var(--icon); }
.tabs button { display: flex; align-items: center; justify-content: center; width: 64px; height: 64px; }
.tabs svg { width: 32px; height: 32px; }
.tabs .screen svg { width: 36px; }
.tabs .blue { color: var(--blue); }
.tabs .cur { border: 2px solid #bfc1c3; border-radius: 6px; }
.tabs hr { width: 44px; margin: 0; border: 0; border-top: 2px solid #dfe1e3; }

.status { display: flex; align-items: center; height: 46px; margin-top: 2px; padding-bottom: 2px; border-top: 2px solid var(--line); font-size: 24px; line-height: 30px; }
.status > span { display: flex; align-items: center; height: 30px; border-right: 2px solid #5a5d64; white-space: nowrap; }
.status em { width: 164px; font-style: normal; }
.c-page { width: 150px; padding-left: 20px; }
.c-info { width: 658px; }
.c-master { width: 376px; padding-left: 16px; }
.c-pos { flex: 1; padding-left: 20px; }
.c-pos svg { width: 28px; height: 22px; margin-right: 13px; }
.c-save { width: 44px; padding-left: 2px; justify-content: center; color: var(--off); }
.c-save svg { width: 20px; height: 20px; }
.c-sign { width: 58px; }
.c-lang { width: 438px; justify-content: center; }
.c-fit { width: 44px; justify-content: center; }
.c-fit svg { width: 24px; height: 24px; }
.c-zoom { width: 285px; padding: 0 16px 0 19px; gap: 12px; }
.status .c-pct { width: 80px; padding-left: 14px; border: 0; }
.zb { width: 16px; height: 16px; background: linear-gradient(var(--ink), var(--ink)) center / 16px 2px no-repeat; }
.zb.plus { background: linear-gradient(var(--ink), var(--ink)) center / 16px 2px no-repeat, linear-gradient(var(--ink), var(--ink)) center / 2px 16px no-repeat; }
.range { position: relative; display: flex; flex: 1; }
.range i { position: absolute; left: 48%; top: 3px; width: 4px; height: 10px; background: var(--ink); }
.range input { width: 100%; height: 16px; margin: 0; appearance: none; background: linear-gradient(#3b3e48 0 4px, #b4b6b8 4px 6px) center 6px / 100% 6px no-repeat; }
.range input::-webkit-slider-thumb { appearance: none; width: 15px; height: 16px; border: 2px solid #6a6d74; border-radius: 50%; background: #fff; }
```
